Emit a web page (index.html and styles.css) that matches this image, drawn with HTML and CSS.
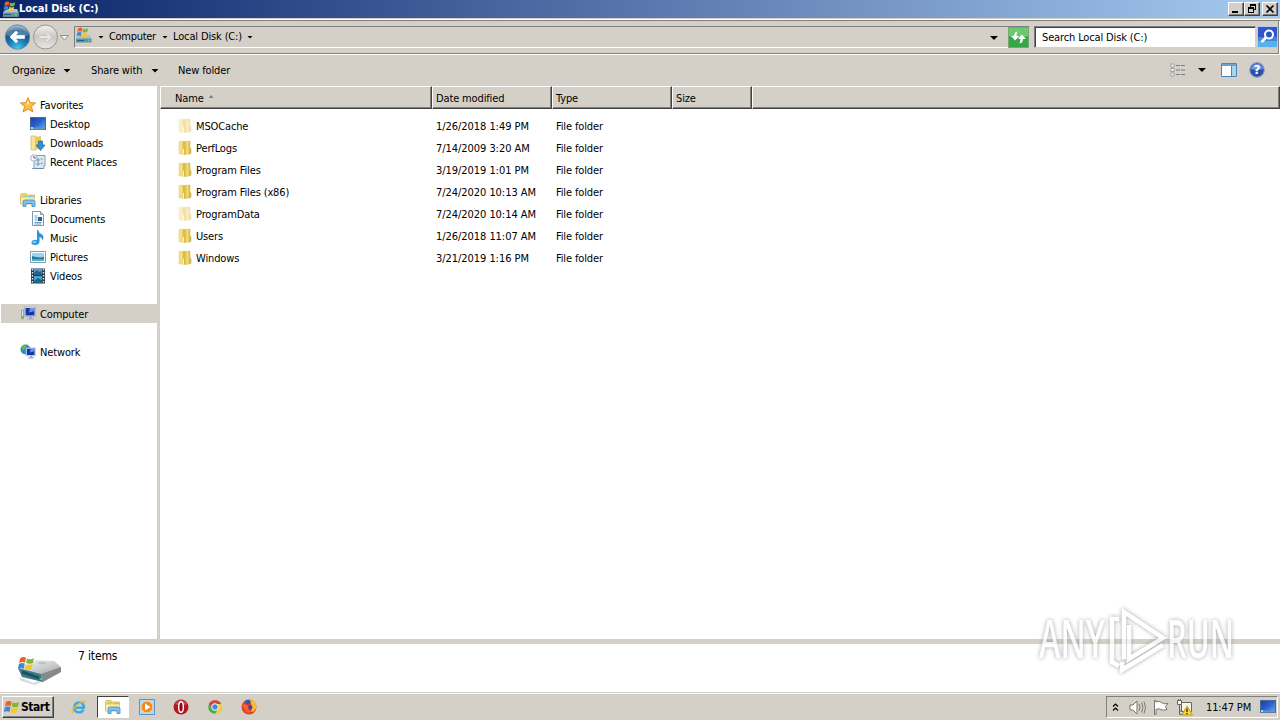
FILE: index.html
```html
<!DOCTYPE html>
<html lang="en">
<head>
<meta charset="utf-8">
<title>Local Disk (C:)</title>
<link rel="stylesheet" href="styles.css">
</head>
<body>
<svg class="defs" width="0" height="0" aria-hidden="true">
  <defs>
    <linearGradient id="gFolder" x1="0" x2="1"><stop offset="0" stop-color="#f6e48d"/><stop offset=".5" stop-color="#ecd05f"/><stop offset=".6" stop-color="#f5e27f"/><stop offset="1" stop-color="#d7b339"/></linearGradient>
    <linearGradient id="gScreen" x1="0" y1="0" x2="1" y2="1"><stop offset="0" stop-color="#1c3d9c"/><stop offset=".5" stop-color="#2a62cd"/><stop offset="1" stop-color="#69b2ef"/></linearGradient>
    <linearGradient id="gDrive" x1="0" y1="0" x2="1" y2="1"><stop offset="0" stop-color="#fafafa"/><stop offset="1" stop-color="#a4a6a7"/></linearGradient>
    <radialGradient id="gBack" cx=".5" cy=".95" r=".9"><stop offset="0" stop-color="#40c8ef"/><stop offset=".45" stop-color="#1c75b0"/><stop offset=".8" stop-color="#164d82"/><stop offset="1" stop-color="#7fa9c8"/></radialGradient>
    <linearGradient id="gFwd" x1="0" y1="0" x2="0" y2="1"><stop offset="0" stop-color="#f3f2ef"/><stop offset=".5" stop-color="#c9c8c5"/><stop offset="1" stop-color="#e9e8e5"/></linearGradient>
    <symbol id="flag" viewBox="0 0 16 16">
      <path d="M2 3Q5 1 7.500 2.700L6.600 7.200Q4 5.800 1 7.500Z" fill="#e9622b"/>
      <path d="M8.500 3.200Q11.500 5 15 3L14 7.500Q11 9 7.600 7.600Z" fill="#7cb83c"/>
      <path d="M.8 8.500Q4 6.800 6.400 8.300L5.400 13Q3 11.600 0 13Z" fill="#3d87d3"/>
      <path d="M7.400 8.700Q10.500 10.300 13.800 8.500L12.800 13Q9.600 14.700 6.400 13.200Z" fill="#f8c62c"/>
    </symbol>
    <symbol id="disk" viewBox="0 0 17 17">
      <path d="M1 11L5 8H15L16.500 11V15.500H1Z" fill="#b9bec1"/>
      <path d="M1 11.500H16.500V15.500H1Z" fill="#5d95a6"/><path d="M2 13.500H9" stroke="#28627a"/><path d="M13 12.500h2v2h-2z" fill="#5bd06a"/>
      <use href="#flag" x="1.500" y="-1" width="12.500" height="12.500"/>
    </symbol>
    <symbol id="folder" viewBox="0 0 14 16">
      <path d="M1 1.500L5 1V14L1 14Z" fill="#f3e08a" stroke="#e4cd6c" stroke-width=".5"/>
      <path d="M5 1.500L12 1V14L5 14.500Z" fill="url(#gFolder)" stroke="#dabb50" stroke-width=".5"/>
      <path d="M5 2L7.500 1.200V14.500L5.500 15Z" fill="#d9b844"/><path d="M5.500 9V14.500" stroke="#fff7c9"/>
      <path d="M12 7.500L13.300 9V13.500L12 14Z" fill="#cdb25a"/>
    </symbol>
    <symbol id="lib" viewBox="0 0 16 16">
      <path d="M.5 2.500L1.500 1.500H6L7 3H14.500V12H.5Z" fill="#f3dc7a" stroke="#d3b251" stroke-width=".8"/>
      <path d="M2 3.500h5v1H2z" fill="#83c874"/><path d="M8 4h6v1H8z" fill="#7ec2ee"/>
      <path d="M1 6H14.500V12H1Z" fill="#fbeeaa"/>
      <path d="M3 14.500V10Q3 8 5 8H13Q15 8 15 10V14.500H12V11.500H6V14.500Z" fill="#7ec4ed" stroke="#3b8bc3" stroke-width=".8"/>
    </symbol>
    <symbol id="desktop" viewBox="0 0 16 14">
      <rect x=".5" y=".5" width="15" height="12" fill="url(#gScreen)" stroke="#4a6a9f"/>
      <path d="M1 10.500H15V12.500H1Z" fill="#6b94b8"/><path d="M1 10h2v2H1z" fill="#9be2f5"/>
    </symbol>
    <symbol id="monitor" viewBox="0 0 16 16">
      <path d="M4.500 1H15.500V10.500H4.500Z" fill="#e2e8f3" stroke="#8a9fc1" stroke-width=".6"/><path d="M5.500 2H14.500V9.500H5.500Z" fill="#1733a8"/><path d="M10 2H14.500V5L9 6.500Z" fill="#718de8"/>
      <path d="M9 10.500h3v2h2v1H7v-1h2z" fill="#97acc4"/>
    </symbol>
  </defs>
</svg>

<div class="screen">
  <header class="titlebar">
    <svg class="i17" viewBox="0 0 17 17"><use href="#disk"/></svg>
    <h1 class="title">Local Disk (C:)</h1>
    <div class="winbtns">
      <button class="wb" aria-label="Minimize"><svg width="12" height="10"><path d="M2 7h6v2H2z"/></svg></button>
      <button class="wb" aria-label="Restore"><svg width="12" height="10"><path d="M4 0h6v6H8V5h1V2H5v1H4zM2 3h6v6H2zM3 5v3h4V5z" fill-rule="evenodd"/></svg></button>
      <button class="wb close" aria-label="Close"><svg width="12" height="10"><path d="M2.500 1.500l7 7M9.500 1.500l-7 7" stroke="#000" stroke-width="1.700"/></svg></button>
    </div>
  </header>

  <nav class="addressband">
    <svg class="navbtns" width="70" height="28" viewBox="0 0 70 28">
      <circle cx="17.500" cy="14" r="12.300" fill="url(#gBack)" stroke="#6f8fa8" stroke-width=".8"/>
      <path d="M6 12Q7 3 17.500 3T29 12Q17 16 6 12Z" fill="#fff" opacity=".25"/>
      <path d="M10 14L16 8L17.800 9.800L15.500 12.500H24.500V15.500H15.500L17.800 18.200L16 20Z" fill="#fff" stroke="#fff" stroke-width=".6"/>
      <circle cx="45.500" cy="14" r="12" fill="url(#gFwd)" stroke="#96948f"/>
      <path d="M52 14L46.500 8.500L45 10L47.500 12.500H39V15.500H47.500L45 18L46.500 19.500Z" fill="#e6e5e3" stroke="#c4c2be" stroke-width=".7"/>
      <path d="M60.500 12.500H68.500L64.500 17Z" fill="#f6f5f2" stroke="#8c867d" stroke-width=".9"/>
    </svg>
    <div class="address">
      <svg class="i17" viewBox="0 0 17 17"><use href="#disk"/></svg>
      <i class="tri a1"></i><span class="crumb c1">Computer</span><i class="tri a2"></i><span class="crumb c2">Local Disk (C:)</span><i class="tri a3"></i>
      <i class="tri drop"></i>
      <svg class="refresh" width="21" height="21" viewBox="0 0 21 21"><rect x=".5" y=".5" width="20" height="20" fill="#35a845" stroke="#76a779"/><path d="M1 1H20V9Q10 13 1 9Z" fill="#68cb6d"/><path d="M9.500 4.500Q6 5 6 9H3L7.200 13.500L11 9H8.500Q8.500 7 9.500 4.500ZM11.500 16.500Q15 16 15 12H18L13.800 7.500L10 12H12.500Q12.500 14 11.500 16.500Z" fill="#fff"/></svg>
    </div>
    <div class="search"><span>Search Local Disk (C:)</span></div>
    <svg class="go" width="21" height="22" viewBox="0 0 21 22"><rect x=".5" y=".5" width="20" height="21" fill="#4285df" stroke="#b4cdf0"/><path d="M1 1H20V11H1Z" fill="#3156cb"/><path d="M1 15H20V21H1Z" fill="#55b2ef"/><circle cx="12" cy="8.500" r="4" fill="#2458c4" stroke="#fff" stroke-width="2"/><path d="M9 11.500L4.500 16" stroke="#fff" stroke-width="2.600"/></svg>
  </nav>

  <div class="toolbar">
    <span class="organize">Organize</span><i class="tri big t1"></i>
    <span class="share">Share with</span><i class="tri big t2"></i>
    <span class="newf">New folder</span>
    <div class="tools">
      <svg width="16" height="14" viewBox="0 0 16 14"><g fill="#fff" stroke="#8a8d94" stroke-width=".8"><path d="M1 1h3v3H1zM1 5.500h3v3H1zM1 10h3v3H1z"/></g><path d="M6 2.500h4m1 0h4M6 7h4m1 0h4M6 11.500h4m1 0h4" stroke="#777c85"/></svg>
      <i class="tri big t3"></i>
      <svg class="pane" width="16" height="14" viewBox="0 0 16 14"><path d="M.5 .5h15v13H.5z" fill="#fff" stroke="#4c86b6"/><path d="M1 1h14v2H1z" fill="#6aa4cb"/><path d="M10.500 3v10" stroke="#4c86b6"/><path d="M11 3h4v10h-4z" fill="#a9d5ed"/></svg>
      <svg class="help" width="16" height="16" viewBox="0 0 16 16"><circle cx="8" cy="8" r="7.300" fill="#2a4fa8" stroke="#91a0c7" stroke-width="1.200"/><path d="M2 7Q3 2 8 2T14 7Q8 9 2 7Z" fill="#6c94df"/><text x="8" y="12.300" text-anchor="middle" class="q">?</text></svg>
    </div>
  </div>

  <main class="body">
    <aside class="sidebar">
      <div class="row top"><svg viewBox="0 0 16 16"><path d="M8 .7L10.200 5.700L15.600 6L11.400 9.500L12.900 15L8 11.900L3.100 15L4.600 9.500L.4 6L5.800 5.700Z" fill="#fcc03a" stroke="#e0872a" stroke-width="1"/><path d="M8 3L9.300 7L6 8Z" fill="#fff0aa"/></svg><span>Favorites</span></div>
      <div class="row"><svg viewBox="0 0 16 16"><use href="#desktop" y="1" width="16" height="14"/></svg><span>Desktop</span></div>
      <div class="row"><svg viewBox="0 0 16 16"><path d="M1 1h5v14H1z" fill="#f5e59a" stroke="#d3b553" stroke-width=".7"/><path d="M5 2l6-1v13H5z" fill="#e9ca59"/><path d="M8.500 6h4v4h2.500L10.500 15.500L6 10h2.500z" fill="#3090db" stroke="#1a63a7" stroke-width=".7"/></svg><span>Downloads</span></div>
      <div class="row"><svg viewBox="0 0 16 16"><path d="M5 1.500h10v10h-1v3H4V5h1z" fill="#dce8f1" stroke="#7895ac" stroke-width=".9"/><path d="M7 5h2v2H7zM10.500 5H13M7 9h2v2H7zM10.500 9.500H13M2 14.500h11" stroke="#638aa7" fill="none" stroke-width=".8"/><circle cx="3.800" cy="4" r="3.200" fill="#f7fafb" stroke="#8ca1b2" stroke-width=".8"/><path d="M3.800 2v2h2" fill="none" stroke="#567"/></svg><span>Recent Places</span></div>
      <div class="row top gap"><svg viewBox="0 0 16 16"><use href="#lib"/></svg><span>Libraries</span></div>
      <div class="row"><svg viewBox="0 0 16 16"><path d="M2.500 .500h8l3 3v11h-11z" fill="#fff" stroke="#7f98ae"/><path d="M10.500 .500v3h3" fill="#c8ddec" stroke="#7f98ae"/><path d="M4.500 5h3M4.500 7h3M4.500 9h3M4.500 11.500h7M4.500 13h7" stroke="#6b9cc7"/><path d="M8 6h4v4H8z" fill="#315d83"/></svg><span>Documents</span></div>
      <div class="row"><svg viewBox="0 0 16 16"><path d="M8 0Q9 3.500 12 4.500Q15 7 12 11Q12.500 7.500 9.500 7V12Q9 15 5 15Q1 15 1.500 12Q2.500 9.200 7 10V0Z" fill="#2f94d7"/><ellipse cx="4.500" cy="12" rx="2" ry="1.300" fill="#7ccaf4"/></svg><span>Music</span></div>
      <div class="row"><svg viewBox="0 0 16 16"><path d="M.5 2.500h15v11H.5z" fill="#fff" stroke="#819cb5"/><path d="M2 4h12v4H2z" fill="#9ad5f4"/><path d="M2 7Q7 9 14 8V12H2Z" fill="#287a84"/><path d="M2 10H14v2H2z" fill="#4eaed0"/></svg><span>Pictures</span></div>
      <div class="row"><svg viewBox="0 0 16 16"><path d="M1 .500h14v15H1z" fill="#273849"/><path d="M4 1h8v6H4zM4 8h8v7H4z" fill="#4ea2d6"/><path d="M4 5l3-3 2 2 2-1 1 4H4zM4 13l4-3 4 2v3H4z" fill="#22638a"/><path d="M2.500 1v14M13.500 1v14" stroke="#e8edf1" stroke-width="1.400" stroke-dasharray="1.500 1.500"/></svg><span>Videos</span></div>
      <div class="row top gap selected"><svg viewBox="0 0 16 16"><use href="#monitor"/><path d="M1.500 4h2v9h-2z" fill="#e8ebe6" stroke="#788a80" stroke-width=".7"/><path d="M2 10h1v2H2z" fill="#3cb83c"/></svg><span>Computer</span></div>
      <div class="row top gap"><svg viewBox="0 0 16 16"><circle cx="5.500" cy="5.500" r="5" fill="#268dc9"/><path d="M2 2Q5 0 6 2L5 5L2 6ZM6 6L9 5L8 9L5 10Z" fill="#64bd55"/><use href="#monitor" x="2" y="3" width="14" height="13.500"/></svg><span>Network</span></div>
    </aside>

    <section class="list">
      <div class="cols head">
        <div class="cell name">Name<i class="sort"></i></div><div class="cell">Date modified</div><div class="cell">Type</div><div class="cell">Size</div><div class="cell"></div>
      </div>
      <div class="files">
        <div class="cols file"><div class="fname faded"><svg viewBox="0 0 14 16"><use href="#folder"/></svg><span>MSOCache</span></div><div class="date">1/26/2018 1:49 PM</div><div>File folder</div></div>
        <div class="cols file"><div class="fname"><svg viewBox="0 0 14 16"><use href="#folder"/></svg><span>PerfLogs</span></div><div class="date">7/14/2009 3:20 AM</div><div>File folder</div></div>
        <div class="cols file"><div class="fname"><svg viewBox="0 0 14 16"><use href="#folder"/></svg><span>Program Files</span></div><div class="date">3/19/2019 1:01 PM</div><div>File folder</div></div>
        <div class="cols file"><div class="fname"><svg viewBox="0 0 14 16"><use href="#folder"/></svg><span>Program Files (x86)</span></div><div class="date">7/24/2020 10:13 AM</div><div>File folder</div></div>
        <div class="cols file"><div class="fname faded"><svg viewBox="0 0 14 16"><use href="#folder"/></svg><span>ProgramData</span></div><div class="date">7/24/2020 10:14 AM</div><div>File folder</div></div>
        <div class="cols file"><div class="fname"><svg viewBox="0 0 14 16"><use href="#folder"/></svg><span>Users</span></div><div class="date">1/26/2018 11:07 AM</div><div>File folder</div></div>
        <div class="cols file"><div class="fname"><svg viewBox="0 0 14 16"><use href="#folder"/></svg><span>Windows</span></div><div class="date">3/21/2019 1:16 PM</div><div>File folder</div></div>
      </div>
    </section>
  </main>

  <section class="details">
    <svg width="46" height="32" viewBox="0 0 46 32">
      <path d="M2 23L17 29L43 16V19L18 31L4 27Z" fill="#aaa" opacity=".45"/>
      <path d="M1 15L19 6L37 7L44 13L24 21Z" fill="url(#gDrive)"/><path d="M24 20L44 13V18L26 28Z" fill="#85898b"/><path d="M1 14L24 20L26 28L5 23Z" fill="#3b7d85"/><path d="M5 18L22 24" stroke="#1d5360" stroke-width="3"/><path d="M24 24v2" stroke="#59c567" stroke-width="2"/><ellipse cx="25" cy="9" rx="4" ry="1.300" fill="#bfc1c2"/>
      <use href="#flag" x="1" y="1" width="17" height="17"/>
    </svg>
    <span>7 items</span>
  </section>

  <footer class="taskbar">
    <button class="start"><svg width="16" height="16" viewBox="0 0 16 16"><use href="#flag"/></svg><span>Start</span></button>
    <div class="apps">
      <div class="app"><svg viewBox="0 0 18 18"><path d="M14 12Q12 15.500 8.500 15Q3.500 14.500 3.500 9.500Q4 4 9 4Q14.500 4 14.500 9.800H5" fill="none" stroke="#41a9df" stroke-width="2.800"/><path d="M2 16Q-1 12 8 6Q17 0 16.500 4" fill="none" stroke="#e8bd35" stroke-width="1.500"/></svg></div>
      <div class="app active"><svg viewBox="0 0 16 16"><use href="#lib"/></svg></div>
      <div class="app"><svg viewBox="0 0 16 16"><path d="M.5 .5h15v15H.5z" fill="#b6d9f0" stroke="#5b94c6"/><circle cx="8" cy="8" r="5.800" fill="#f28a20" stroke="#fbd18b" stroke-width=".8"/><path d="M6 4.500L11.500 8L6 11.500Z" fill="#fff"/></svg></div>
      <div class="app"><svg viewBox="0 0 16 16"><circle cx="8" cy="8" r="7.500" fill="#b51722"/><path d="M2 5Q8-3 14 5Q8 8 2 5" fill="#cf454b"/><ellipse cx="8" cy="8" rx="2.300" ry="5.300" fill="#8a0914" stroke="#fff" stroke-width="1.400"/></svg></div>
      <div class="app"><svg viewBox="0 0 16 16"><circle cx="8" cy="8" r="6.800" fill="#4baa50"/><path d="M2 4.700A7 7 0 0 1 14.300 5H8L5 9Z" fill="#df4334"/><path d="M14.300 5A7 7 0 0 1 8 15L11 9.500L10 5Z" fill="#f9cd37"/><circle cx="8" cy="8" r="3.300" fill="#4286ed" stroke="#fff"/></svg></div>
      <div class="app"><svg viewBox="0 0 16 16"><circle cx="8" cy="8" r="7.500" fill="#e33b2c"/><path d="M8 .8Q15 1 15.500 7Q15 13 10 13L11 7Z" fill="#f7bb32"/><path d="M4 2Q8-1 10 3Q9 6 5 5Z" fill="#2c5bb5"/><path d="M1 6Q4 4 7 7L10 8Q9 11 6 10Q8 13 12 11Q9 15 5 13Z" fill="#f5652a"/><path d="M7 7Q11 5.500 11.500 8.500Q11 11 8 10.500Z" fill="#473cac"/></svg></div>
    </div>
    <div class="tray">
      <svg class="chev" width="7" height="9" viewBox="0 0 7 9"><path d="M1 3.500L3.500 1L6 3.500M1 7.500L3.500 5L6 7.500" fill="none" stroke="#000" stroke-width="1.200"/></svg>
      <svg class="vol" width="17" height="15" viewBox="0 0 17 15"><path d="M1 5h3l4-4v13l-4-4H1z" fill="#fff" stroke="#77736c"/><path d="M10 4q2 3.500 0 7M12.500 2.500q3 5 0 10M15 1.500q3 6 0 12" fill="none" stroke="#7d7972"/></svg>
      <svg class="flagi" width="16" height="15" viewBox="0 0 16 15"><path d="M1.500 .500V14.500H3V9.500Q6 8 8 9.500T14 9.500L12.500 6.500L15 3.500Q11 4.500 8.500 2.500T3 2V.500Z" fill="#fff" stroke="#77736c"/></svg>
      <svg class="net" width="17" height="17" viewBox="0 0 17 17"><path d="M5.500 3.500h10v9h-10z" fill="#f5f4ef" stroke="#69665e"/><path d="M1.500 1.500h4v4h-4z" fill="#fff" stroke="#69665e"/><path d="M2.500 0v2M4.500 0v2M3.500 6v9.500h4M3.500 12h3" fill="none" stroke="#69665e"/><path d="M11 7L16.500 16H6Z" fill="#f7d931" stroke="#ba9f1b"/><path d="M11 9.500v3.500M11 14v1.200" stroke="#221c00" stroke-width="1.200"/></svg>
      <span class="clock">11:47 PM</span>
      <svg class="desk" width="16" height="14" viewBox="0 0 16 14"><use href="#desktop"/></svg>
    </div>
  </footer>

  <svg class="watermark" width="248" height="76" viewBox="0 0 248 76">
    <g class="wm">
      <text x="7" y="56" textLength="66" lengthAdjust="spacingAndGlyphs">ANY</text>
      <text x="135" y="56" textLength="67" lengthAdjust="spacingAndGlyphs">RUN</text>
      <path d="M87 17H80V60L87 64"/><path d="M92 57V10L131 36L97 57V23"/><path d="M90 60V68L131 43"/>
    </g>
  </svg>
</div>
</body>
</html>
```
FILE: styles.css
```css
* { box-sizing: border-box; }
body { margin: 0; overflow: hidden; }
.defs { position: absolute; }
.screen {
  position: relative; width: 1280px; height: 720px; display: flex; flex-direction: column;
  background: #d4d0c8; color: #000;
  font: 11px/14px "DejaVu Sans Condensed", "DejaVu Sans", sans-serif; font-stretch: condensed;
  letter-spacing: -0.14px; white-space: nowrap;
}
svg { display: block; flex: none; }
button { font: inherit; letter-spacing: inherit; color: inherit; padding: 0; background: #d4d0c8; border: 1px solid; border-color: #fff #404040 #404040 #fff; box-shadow: inset -1px -1px #808080; border-radius: 0; }
.i17 { width: 17px; height: 17px; }

.titlebar { height: 18px; display: flex; align-items: center; padding: 0 2px; background: linear-gradient(90deg, #0a246a, #a6caf0); }
.title { margin: 0 auto 0 0; color: #fff; font-size: 11px; font-weight: bold; letter-spacing: -0.05px; }
.winbtns { display: flex; }
.wb { width: 16px; height: 14px; display: flex; align-items: center; justify-content: center; }
.wb.close { margin-left: 2px; }

.addressband { height: 37px; border-top: 1px solid #d4d0c8; display: flex; align-items: flex-start; padding: 4px 2px 0 0; box-shadow: inset 0 1px #fff, inset 0 2px #808080, inset -1px -1px #fff, inset -2px -2px #808080; }
.navbtns { margin-right: 4px; }
.address { width: 956px; height: 22px; margin-top: 3px; border: 1px solid; border-color: #808080 #d4d0c8 #fff #808080; display: flex; align-items: center; }
.address .i17 { margin-top: -3px; }
.tri { width: 5px; height: 3px; background: #000; clip-path: polygon(0 0, 100% 0, 50% 100%); flex: none; }
.tri.big { width: 8px; height: 4px; }
.tri.a1, .tri.a2, .tri.a3 { width: 6px; }
.a1 { margin: 0 5px 0 6px; }
.c1 { width: 53px; letter-spacing: -0.3px; } .c2 { width: 74px; }
.a2 { margin-right: 5px; }
.drop { width: 8px; height: 4px; margin: 2px 10px 0 auto; }
.refresh { margin-right: 0; }
.search { width: 222px; height: 22px; margin: 3px 1px 0 4px; padding: 4px 7px 0; background: #fff; border: 1px solid; border-color: #808080 #d4d0c8 #d4d0c8 #808080; box-shadow: inset 1px 1px #404040; }
.go { margin-top: 3px; }

.toolbar { height: 31px; display: flex; align-items: center; padding-left: 12px; }
.organize { width: 51px; } .share { width: 60px; }
.t1 { margin-right: 20px; }
.t2 { margin-right: 19px; }
.tools { margin-left: auto; margin-right: 15px; display: flex; align-items: center; margin-top: -2px; }
.t3 { margin: 1px 15px 0 12px; }
.help { margin-left: 12px; }
.q { font: bold 12px "DejaVu Sans", sans-serif; fill: #fff; }

.body { height: 553px; display: flex; }
.sidebar { width: 160px; background: #fff; padding: 9px 0 0 1px; border-right: 3px solid #d4d0c8; }
.row { height: 19px; padding: 3px 0 0 29px; display: flex; align-items: center; gap: 4px; }
.row svg { width: 16px; height: 16px; margin-top: -3px; }
.row.top { padding-left: 19px; }
.gap { margin-top: 19px; }
.selected { background: #d4d0c8; }
.list { flex: 1; background: #fff; }
.cols { display: grid; grid-template-columns: 272px 120px 120px 80px 1fr; }
.head { height: 23px; }
.cell { background: #d4d0c8; padding: 5px 0 0 3px; border: 1px solid; border-color: #fff #404040 #404040 #fff; box-shadow: inset -1px -1px #808080; }
.cell.name { padding-left: 14px; }
.sort { display: inline-block; width: 5px; height: 3px; margin: 0 0 4px 5px; background: #808080; clip-path: polygon(50% 0, 100% 100%, 0 100%); }
.files { padding-top: 7px; }
.file { height: 22px; align-items: center; }
.file > div { padding-left: 4px; }
.file > .fname { display: flex; align-items: center; gap: 4px; padding-left: 18px; }
.file > .date { letter-spacing: -0.05px; }
.fname svg { width: 14px; height: 16px; margin-top: -2px; }
.faded svg { opacity: .45; }

.details { height: 53px; border-top: 5px solid #d4d0c8; background: #fff; display: flex; padding-left: 17px; }
.details svg { margin-top: 10px; }
.details span { margin: 5px 0 0 15px; font-size: 12px; }

.taskbar { height: 28px; border-top: 1px solid #d4d0c8; box-shadow: inset 0 1px #fff; display: flex; align-items: flex-start; padding: 3px 2px 0; }
.start { width: 52px; height: 22px; display: flex; align-items: center; gap: 1px; font-weight: bold; font-size: 12px; letter-spacing: -0.45px; padding-left: 1px; }
.apps { display: flex; margin-left: 8px; }
.app { width: 34px; height: 22px; display: flex; align-items: center; justify-content: center; }
.app svg { width: 16px; height: 16px; }
.app.active { width: 32px; margin: 0 1px; background: #fff; border: 1px solid; border-color: #404040 #fff #fff #404040; }
.tray { width: 172px; height: 22px; margin-left: auto; border: 1px solid; border-color: #808080 #fff #fff #808080; display: flex; align-items: center; padding-left: 5px; }
.vol { margin-left: 10px; }
.flagi { margin-left: 7px; }
.net { margin-left: 7px; }
.clock { width: 46px; margin-left: 13px; padding-top: 1px; }
.desk { margin-left: 8px; }

.watermark { position: absolute; left: 1032px; top: 602px; pointer-events: none; }
.wm { fill: none; stroke: #fff; stroke-width: 4.5; filter: drop-shadow(0 0 2px #888); opacity: .75; }
.wm text { font: 600 52px "Open Sans", sans-serif; letter-spacing: 0; fill: #fff; stroke: none; }
```
